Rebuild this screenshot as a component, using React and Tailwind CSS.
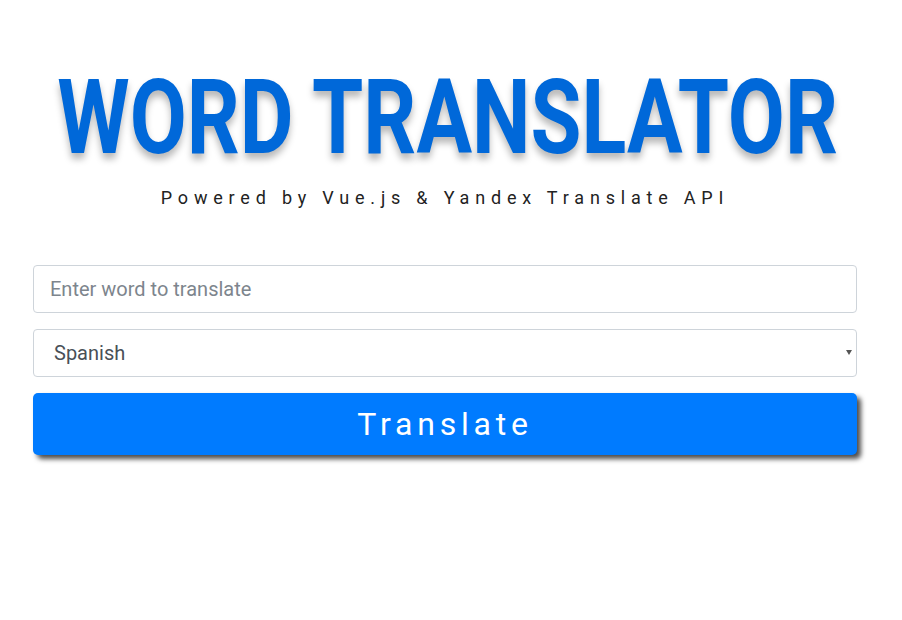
import React, { useState } from 'react';

const LANGS = ['Spanish', 'French', 'German', 'Italian', 'Russian'];

export default function App() {
  const [word, setWord] = useState('');
  const [lang, setLang] = useState('Spanish');

  return (
    <div className="min-h-[620px] bg-white font-['Roboto',sans-serif] overflow-hidden">
      <div className="w-[824px] ml-[33px]">
        <div className="pt-[56px] flex justify-center">
          <h1 className="text-[103px] leading-[1.2] font-bold text-[#0068d9] whitespace-nowrap scale-x-[0.804] translate-x-[3px] [text-shadow:0_6px_8px_rgba(0,0,0,0.28)]">
            WORD TRANSLATOR
          </h1>
        </div>
        <p className="mt-[4px] text-center text-[18px] tracking-[5.8px] text-[#222]">
          Powered by Vue.js &amp; Yandex Translate API
        </p>

        <div className="mt-[54px] flex flex-col gap-[16px]">
          <input
            value={word}
            onChange={e => setWord(e.target.value)}
            placeholder="Enter word to translate"
            className="h-[48px] w-full rounded-[4px] border border-[#ced4da] px-[16px] text-[20px] text-[#495057] placeholder:text-[#7d858d] outline-none"
          />
          <div className="relative">
            <select
              value={lang}
              onChange={e => setLang(e.target.value)}
              className="h-[48px] w-full appearance-none rounded-[4px] border border-[#ced4da] bg-white pl-[20px] text-[20px] text-[#495057] outline-none"
            >
              {LANGS.map(l => <option key={l}>{l}</option>)}
            </select>
            <span className="pointer-events-none absolute right-[5px] top-[21px] h-0 w-0 border-x-[3.5px] border-t-[5px] border-x-transparent border-t-[#555]" />
          </div>
          <button className="h-[62px] w-full rounded-[5px] bg-[#007bff] text-[32px] tracking-[4.8px] text-white shadow-[4px_4px_5px_rgba(0,0,0,0.7)]">
            Translate
          </button>
        </div>
      </div>
    </div>
  );
}
